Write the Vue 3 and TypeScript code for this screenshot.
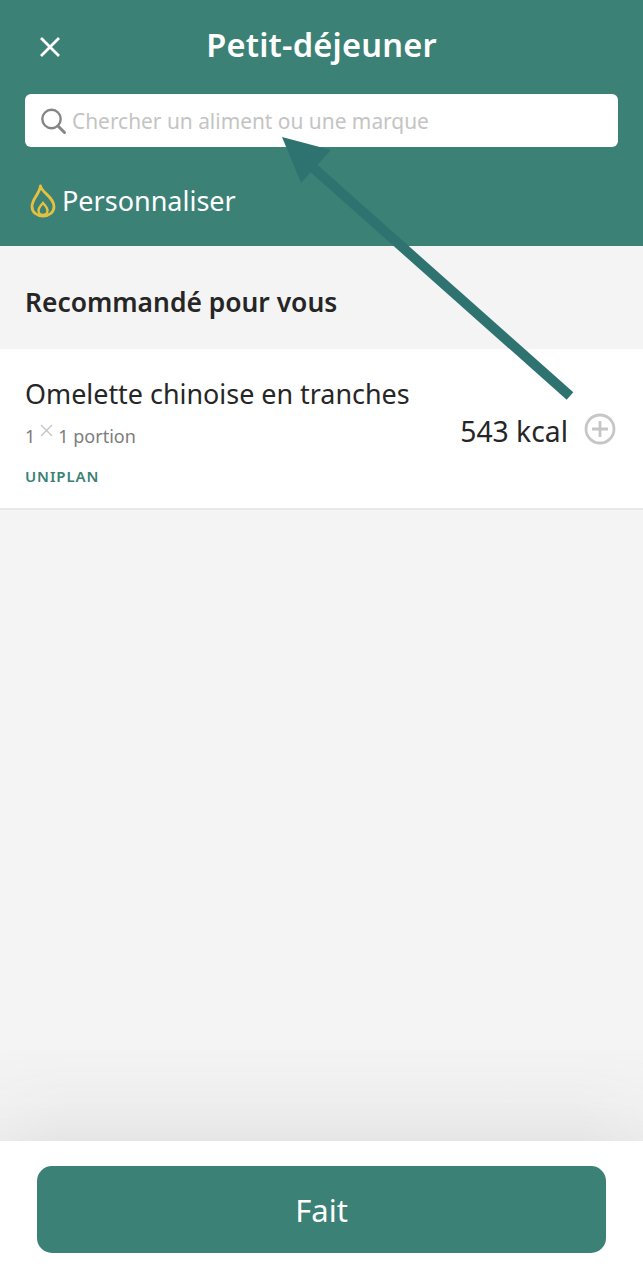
<script setup lang="ts">
const title = 'Petit-déjeuner'
</script>

<template>
  <div class="page">
    <header class="top">
      <div class="bar">
        <svg class="close" width="22" height="22" viewBox="0 0 22 22"><path d="M2 2 L20 20 M20 2 L2 20" stroke="#fff" stroke-width="2.8" fill="none"/></svg>
        <h1>{{ title }}</h1>
      </div>
      <div class="search">
        <svg width="28" height="28" viewBox="0 0 28 28"><circle cx="12.5" cy="12" r="9.2" stroke="#858585" stroke-width="2.4" fill="none"/><path d="M19 19 L25.5 25.5" stroke="#858585" stroke-width="3" stroke-linecap="round"/></svg>
        <span>Chercher un aliment ou une marque</span>
      </div>
      <div class="perso">
        <svg width="26" height="34" viewBox="0 0 26 34"><path d="M10.5 2 C12 9 24 13 24 22.5 C24 28.5 19 32 13 32 C7 32 2 28.5 2 22.5 C2 15 9.5 10 10.5 2 Z" fill="none" stroke="#e6c03f" stroke-width="2.8" stroke-linejoin="round"/><path d="M13 19 C15 21.5 17.5 23.5 17.5 26.5 C17.5 29 15.5 31 13 31 C10.5 31 8.5 29 8.5 26.5 C8.5 23.5 11 21.5 13 19 Z" fill="none" stroke="#e6c03f" stroke-width="2.4"/></svg>
        <span>Personnaliser</span>
      </div>
    </header>

    <main class="content">
      <h2>Recommandé pour vous</h2>
      <section class="row">
        <div class="info">
          <div class="name">Omelette chinoise en tranches</div>
          <div class="qty">
            <span>1</span>
            <svg width="13" height="13" viewBox="0 0 13 13"><path d="M1 1 L12 12 M12 1 L1 12" stroke="#c4c4c4" stroke-width="1.4"/></svg>
            <span>1 portion</span>
          </div>
          <div class="brand">UNIPLAN</div>
        </div>
        <div class="kcal">543 kcal</div>
        <svg class="plus" width="32" height="32" viewBox="0 0 32 32"><circle cx="16" cy="16" r="14" fill="none" stroke="#c6c6c6" stroke-width="2.8"/><path d="M16 8 V24 M8 16 H24" stroke="#c6c6c6" stroke-width="2.8"/></svg>
      </section>
      <div class="fade"></div>
    </main>

    <footer class="bottom">
      <button class="done">Fait</button>
    </footer>

    <svg class="arrow" width="643" height="420" viewBox="0 0 643 420">
      <path d="M570 396 L310 165" stroke="#2f7371" stroke-width="10" fill="none"/>
      <path d="M282 137 L331 150 L301 183 Z" fill="#2f7371"/>
    </svg>
  </div>
</template>

<style>
body { margin: 0; }
</style>

<style scoped>
.page {
  position: relative;
  width: 643px;
  height: 1280px;
  display: flex;
  flex-direction: column;
  background: #f4f4f4;
  font-family: "Noto Sans", "Open Sans", sans-serif;
  overflow: hidden;
}
.top {
  height: 246px;
  flex: none;
  background: #3b8176;
  padding: 0 25px;
  box-sizing: border-box;
}
.bar {
  height: 94px;
  display: flex;
  align-items: center;
  justify-content: center;
  position: relative;
}
.close { position: absolute; left: 14px; top: 36px; }
h1 {
  margin: 0 0 6px;
  font-size: 32.6px;
  font-weight: 600;
  color: #fff;
  letter-spacing: 0.2px;
}
.search {
  height: 53px;
  background: #fff;
  border-radius: 6px;
  display: flex;
  align-items: center;
  gap: 5px;
  padding-left: 14px;
  box-sizing: border-box;
}
.search span { color: #c4c4c4; font-size: 20.9px; }
.perso {
  display: flex;
  align-items: center;
  gap: 6px;
  margin-top: 35px;
  padding-left: 5px;
  color: #fff;
  font-size: 27px;
}
.content {
  flex: 1;
  position: relative;
  display: flex;
  flex-direction: column;
}
h2 {
  margin: 0;
  height: 103px;
  padding: 9px 0 0 25px;
  box-sizing: border-box;
  display: flex;
  align-items: center;
  font-size: 26.4px;
  font-weight: 600;
  color: #262626;
}
.row {
  height: 161px;
  box-sizing: border-box;
  background: #fff;
  border-bottom: 2px solid #e8e8e8;
  display: flex;
  align-items: center;
  padding: 4px 27px 0 25px;
}
.info { flex: 1; }
.name { font-size: 26.9px; color: #262626; line-height: 34px; }
.qty {
  display: flex;
  align-items: flex-start;
  gap: 5px;
  margin-top: 13px;
  font-size: 18px;
  line-height: 24px;
  color: #7d7d7d;
}
.brand {
  margin-top: 19px;
  font-size: 15px;
  font-weight: 600;
  letter-spacing: 0.9px;
  color: #3b8176;
  line-height: 18px;
}
.kcal { font-size: 28.3px; color: #262626; margin-right: 16px; }
.plus { flex: none; margin-top: -4px; }
.fade {
  position: absolute;
  left: 0;
  right: 0;
  bottom: 0;
  height: 96px;
  background: linear-gradient(to bottom, rgba(228,228,228,0), rgba(228,228,228,0.35) 60%, #e5e5e5);
  -webkit-mask-image: linear-gradient(to right, rgba(0,0,0,0.6), #000 10%, #000 90%, rgba(0,0,0,0.6));
  mask-image: linear-gradient(to right, rgba(0,0,0,0.6), #000 10%, #000 90%, rgba(0,0,0,0.6));
}
.bottom {
  height: 139px;
  flex: none;
  background: #fff;
  padding: 25px 37px 0;
  box-sizing: border-box;
}
.done {
  display: block;
  width: 100%;
  height: 87px;
  border: none;
  border-radius: 15px;
  background: #3b8176;
  color: #fff;
  font-family: inherit;
  font-size: 31px;
}
.arrow { position: absolute; left: 0; top: 0; pointer-events: none; }
</style>
